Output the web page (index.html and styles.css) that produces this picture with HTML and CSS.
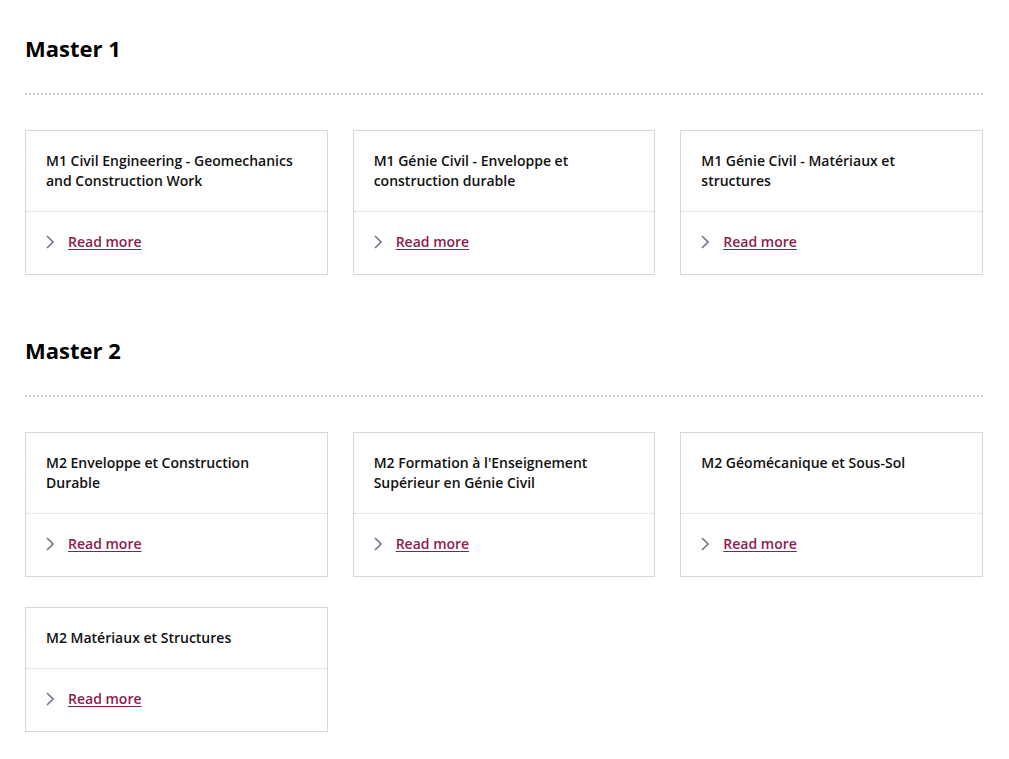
FILE: index.html
```html
<!DOCTYPE html>
<html lang="en">
<head>
<meta charset="utf-8">
<title>Masters</title>
<link rel="stylesheet" href="styles.css">
</head>
<body>
<main class="page">
  <section class="level">
    <h2 class="level-title">Master 1</h2>
    <div class="cards">
      <article class="card">
        <h3 class="card-title">M1 Civil Engineering - Geomechanics and Construction Work</h3>
        <div class="card-foot"><svg class="chev" viewBox="0 0 8 14"><path d="M1 1l6 6-6 6"/></svg><a href="#" class="more">Read more</a></div>
      </article>
      <article class="card">
        <h3 class="card-title">M1 Génie Civil - Enveloppe et construction durable</h3>
        <div class="card-foot"><svg class="chev" viewBox="0 0 8 14"><path d="M1 1l6 6-6 6"/></svg><a href="#" class="more">Read more</a></div>
      </article>
      <article class="card">
        <h3 class="card-title">M1 Génie Civil - Matériaux et structures</h3>
        <div class="card-foot"><svg class="chev" viewBox="0 0 8 14"><path d="M1 1l6 6-6 6"/></svg><a href="#" class="more">Read more</a></div>
      </article>
    </div>
  </section>
  <section class="level">
    <h2 class="level-title">Master 2</h2>
    <div class="cards">
      <article class="card">
        <h3 class="card-title">M2 Enveloppe et Construction Durable</h3>
        <div class="card-foot"><svg class="chev" viewBox="0 0 8 14"><path d="M1 1l6 6-6 6"/></svg><a href="#" class="more">Read more</a></div>
      </article>
      <article class="card">
        <h3 class="card-title">M2 Formation à l'Enseignement Supérieur en Génie Civil</h3>
        <div class="card-foot"><svg class="chev" viewBox="0 0 8 14"><path d="M1 1l6 6-6 6"/></svg><a href="#" class="more">Read more</a></div>
      </article>
      <article class="card">
        <h3 class="card-title">M2 Géomécanique et Sous-Sol</h3>
        <div class="card-foot"><svg class="chev" viewBox="0 0 8 14"><path d="M1 1l6 6-6 6"/></svg><a href="#" class="more">Read more</a></div>
      </article>
      <article class="card">
        <h3 class="card-title">M2 Matériaux et Structures</h3>
        <div class="card-foot"><svg class="chev" viewBox="0 0 8 14"><path d="M1 1l6 6-6 6"/></svg><a href="#" class="more">Read more</a></div>
      </article>
    </div>
  </section>
</main>
</body>
</html>
```
FILE: styles.css
```css
* { box-sizing: border-box; }
html, body { margin: 0; padding: 0; background: #fff; }
body {
  font-family: "Open Sans", "Noto Sans", sans-serif;
  color: #111;
}
.page {
  width: 958px;
  margin-left: 25px;
  padding-top: 33px;
}
.level + .level { margin-top: 60px; }
.level-title {
  margin: 0;
  font-size: 22px;
  line-height: 30px;
  font-weight: 700;
  color: #000;
  padding-bottom: 30px;
  border-bottom: 2px dotted #cfcfcf;
}
.cards {
  margin-top: 35px;
  display: grid;
  grid-template-columns: repeat(3, 1fr);
  column-gap: 25px;
  row-gap: 30px;
}
.card {
  border: 1px solid #d8d8d8;
  display: flex;
  flex-direction: column;
  background: #fff;
}
.card-title {
  flex: 1;
  margin: 0;
  padding: 20px 20px 20px;
  font-size: 14px;
  line-height: 20px;
  font-weight: 600;
  color: #111;
  border-bottom: 1px dotted #cfcfcf;
}
.card-foot {
  display: flex;
  align-items: center;
  padding: 18px 20px 21px;
  height: 62px;
}
.chev {
  width: 8px;
  height: 14px;
  fill: none;
  stroke: #6f7a8c;
  stroke-width: 1.6;
  margin-right: 14px;
  flex: none;
}
.more {
  font-size: 14px;
  line-height: 22px;
  font-weight: 600;
  color: #8b1d4f;
  text-decoration: underline;
  text-underline-offset: 2px;
}
```
